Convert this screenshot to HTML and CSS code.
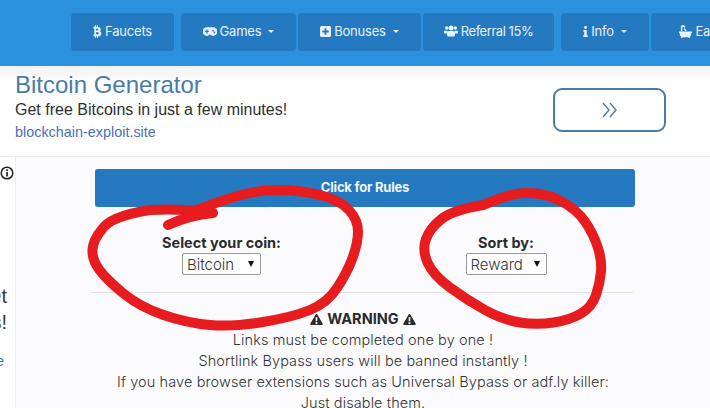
FILE: index.html
```html
<!DOCTYPE html>
<html lang="en">
<head>
<meta charset="utf-8">
<title>Bitcoin Generator</title>
<link rel="stylesheet" href="styles.css">
</head>
<body>
<div class="page">
  <nav class="nav">
    <a class="nav-btn w-faucets"><svg class="ic" viewBox="0 0 10 14"><path fill="#e8f2fb" d="M2 0h1.3v1.8h1V0h1.3v1.9C7.6 2.2 8.700 3.200 8.700 4.600c0 1-.6 1.800-1.400 2.200 1.100.4 1.900 1.300 1.900 2.600 0 1.800-1.400 2.800-3.500 2.900V14H4.300v-1.700h-1V14H2v-1.700H.5v-2h1V3.700h-1v-2H2zm1.300 3.900v2h1.500c.7 0 1.200-.4 1.200-1s-.5-1-1.200-1zm0 3.900v2.300h1.800c.8 0 1.300-.5 1.300-1.150S5.900 7.800 5.100 7.800z"/></svg>Faucets</a>
    <a class="nav-btn w-games"><svg class="ic ic-wide" viewBox="0 0 16 10"><path fill="#e8f2fb" fill-rule="evenodd" d="M4.500 0h7a4.800 4.800 0 0 1 0 10c-1.400 0-2.300-.8-3-1.700h-1c-.7.9-1.600 1.700-3 1.700a4.800 4.800 0 0 1 0-10zM3.800 2.800v1.400H2.400v1.500h1.400v1.500h1.500V5.700h1.400V4.200H5.300V2.800zm7.700.2a1 1 0 1 0 0 2 1 1 0 0 0 0-2zm1.500 2a1 1 0 1 0 0 2 1 1 0 0 0 0-2z"/></svg>Games<span class="caret"></span></a>
    <a class="nav-btn w-bonuses"><svg class="ic" viewBox="0 0 11 11"><path fill="#e8f2fb" fill-rule="evenodd" d="M1.500 0h8A1.500 1.500 0 0 1 11 1.500v8A1.500 1.500 0 0 1 9.500 11h-8A1.500 1.500 0 0 1 0 9.500v-8A1.500 1.500 0 0 1 1.500 0zM4.600 2.300v2.300H2.300v1.800h2.300v2.300h1.800V6.400h2.300V4.600H6.400V2.300z"/></svg>Bonuses<span class="caret"></span></a>
    <a class="nav-btn w-referral"><svg class="ic ic-users" viewBox="0 0 14 11"><g fill="#e8f2fb"><circle cx="2.700" cy="2.500" r="1.700"/><circle cx="11.300" cy="2.500" r="1.700"/><circle cx="7" cy="2.600" r="2.500"/><path d="M0 5.200h2.800c.6 0 .9.300 1 .6-.7.500-1.100 1.300-1.100 2.300H.6C.2 8.100 0 7.800 0 7.400zM14 5.200h-2.800c-.6 0-.9.300-1 .6.700.5 1.100 1.300 1.100 2.300h2.100c.4 0 .6-.3.600-.7z"/><path d="M4.700 5.500h4.600c1 0 1.700.8 1.700 1.800v2.200c0 .9-.6 1.500-1.500 1.500H4.500c-.9 0-1.500-.6-1.500-1.500V7.300c0-1 .7-1.800 1.700-1.800z"/></g></svg>Referral 15%</a>
    <a class="nav-btn w-info"><svg class="ic ic-info" viewBox="0 0 6 13"><g fill="#e8f2fb"><circle cx="3" cy="1.700" r="1.700"/><path d="M.5 4.700h4v6.300h1.200v2H.3v-2h1.200V6.700h-1z"/></g></svg>Info<span class="caret"></span></a>
    <a class="nav-btn w-earn"><svg class="ic ic-bath" viewBox="0 0 14 14"><g fill="#e8f2fb"><path d="M2 7V2.200C2 1 2.900 0 4.200 0c.9 0 1.500.5 1.900 1.200L7 1.800 5.800 3.300 5 2.400c-.2-.4-.5-.6-.8-.6-.4 0-.6.300-.6.700V7z"/><path d="M6 3.500l2.200 2.200-1 1-2.200-2.200zM0 7h14v1.500h-.7c0 2.200-.7 3.400-1.800 4.100l.5 1.400h-1.500l-.4-.8H3.900l-.4.800H2l.5-1.400C1.400 11.900.7 10.700.7 8.500H0z"/></g></svg>Earn</a>
  </nav>

  <section class="ad">
    <div class="ad-copy">
      <h2 class="ad-title">Bitcoin Generator</h2>
      <p class="ad-text">Get free Bitcoins in just a few minutes!</p>
      <a class="ad-link">blockchain-exploit.site</a>
    </div>
    <a class="ad-cta"><svg class="chev" viewBox="0 0 15 16"><path fill="none" stroke="#4a7ba6" stroke-width="1.400" d="M1 1l6 7-6 7M8 1l6 7-6 7"/></svg></a>
  </section>

  <div class="main">
    <aside class="side">
      <svg class="info-ic" viewBox="0 0 14 14"><circle cx="7" cy="7" r="5.800" fill="#fff" stroke="#222" stroke-width="1.500"/><rect x="6.200" y="6" width="1.700" height="4.500" fill="#222"/><rect x="6.200" y="3.300" width="1.700" height="1.700" fill="#222"/></svg>
      <p class="side-head">Get<br>Bitcoins!</p>
      <a class="side-link">exploit.site</a>
    </aside>
    <main class="content">
      <button class="rules">Click for Rules</button>
      <div class="selectors">
        <label class="field field-coin"><b>Select your coin:</b><span class="select select-coin">Bitcoin<i class="arrow"></i></span></label>
        <label class="field field-sort"><b>Sort by:</b><span class="select select-sort">Reward<i class="arrow"></i></span></label>
      </div>
      <hr class="rule">
      <div class="warning">
        <h3 class="warn-title"><svg class="tri" viewBox="0 0 14 12"><path fill="#2b2b2b" fill-rule="evenodd" d="M7 0c.4 0 .7.200.9.500l5.900 10c.4.700-.1 1.500-.9 1.500H1.100C.3 12-.2 11.200.2 10.500l5.900-10C6.300.2 6.600 0 7 0zM6 3.500l.2 4.500h1.600L8 3.500zM7 8.700a1.200 1.200 0 1 0 0 2.400 1.200 1.200 0 0 0 0-2.400z"/></svg> WARNING <svg class="tri" viewBox="0 0 14 12"><path fill="#2b2b2b" fill-rule="evenodd" d="M7 0c.4 0 .7.200.9.500l5.900 10c.4.700-.1 1.500-.9 1.500H1.100C.3 12-.2 11.200.2 10.500l5.900-10C6.300.2 6.600 0 7 0zM6 3.500l.2 4.500h1.600L8 3.500zM7 8.700a1.200 1.200 0 1 0 0 2.400 1.200 1.200 0 0 0 0-2.400z"/></svg></h3>
        <p>Links must be completed one by one !</p>
        <p>Shortlink Bypass users will be banned instantly !</p>
        <p>If you have browser extensions such as Universal Bypass or adf.ly killer:</p>
        <p>Just disable them.</p>
      </div>
    </main>
  </div>

  <svg class="scribble" viewBox="0 0 710 408" aria-hidden="true">
    <path d="M168 225Q190 215 213 213Q180 208 150 210Q110 216 101.500 230Q93 240 92.500 250Q92 260 99.500 270Q107 280 123.500 293.500Q140 307 163.500 315Q187 323 210 325Q233 327 263 322Q293 317 310 310Q327 303 337 288Q347 273 352.500 258Q358 243 358 231.500Q358 220 349 210Q340 200 320 195Q300 190 278.500 190Q257 190 237 196Q217 202 197 210" fill="none" stroke="#e61c1f" stroke-width="10" stroke-linecap="round" stroke-linejoin="round"/>
    <path d="M483 205Q453 210 441.500 219Q430 228 426 239Q422 250 427.500 262.500Q433 275 450 287.500Q467 300 485 310Q503 320 520 322.500Q537 325 553.500 322.500Q570 320 581 313.500Q592 307 596 295Q600 283 601 271.500Q602 260 597.500 246.500Q593 233 585 221.500Q577 210 563.500 202.500Q550 195 536.500 193.500Q523 192 513 194.500Q503 197 483 205Z" fill="none" stroke="#e61c1f" stroke-width="10" stroke-linecap="round" stroke-linejoin="round"/>
  </svg>
</div>
</body>
</html>
```
FILE: styles.css
```css
* { box-sizing: border-box; }
html, body { margin: 0; padding: 0; }
body { font-family: "Inter", "Liberation Sans", sans-serif; background: #fbfbfd; color: #2b2b2b; overflow: hidden; }
.page { position: relative; width: 710px; height: 408px; overflow: hidden; }

.nav { height: 66px; background: #2b90de; padding: 13px 0 0 71px; display: flex; align-items: flex-start; gap: 2px; overflow: hidden; }
.nav-btn { flex: none; height: 38px; padding-bottom: 2px; background: #2579c0; border-radius: 4px; color: #e8f2fb; font-size: 13px; letter-spacing: -.2px; display: flex; align-items: center; justify-content: center; }
.w-faucets { width: 103px; margin-right: 5px; }
.w-games { width: 115px; }
.w-bonuses { width: 123px; }
.w-referral { width: 131px; margin-right: 5px; letter-spacing: -.45px; }
.w-info { width: 88px; }
.w-earn { width: 100px; }
.ic { width: 9px; height: 13px; margin-right: 3px; flex: none; }
.ic-wide { width: 14px; height: 9px; }
.w-bonuses .ic { width: 11px; height: 11px; }
.ic-users { width: 14px; height: 12px; }
.ic-info { width: 5px; height: 11px; }
.ic-bath { width: 13px; height: 13px; }
.caret { width: 0; height: 0; margin-left: 7px; border-left: 3.500px solid transparent; border-right: 3.500px solid transparent; border-top: 3.500px solid #e8f2fb; }

.ad { height: 91px; background: linear-gradient(#f1f2f3 0, #f6f6f7 8px, #fff 14px); border-bottom: 1px solid #e6e6e8; padding-left: 15px; display: flex; align-items: flex-start; }
.ad-copy { flex: 1; padding-top: 5px; }
.ad-title { margin: 0; font: 400 24px/28px "Liberation Sans", sans-serif; color: #4a7ba6; }
.ad-text { margin: 0; font: 16px/22px "Liberation Sans", sans-serif; color: #2f2f2f; }
.ad-link { display: block; margin-top: 1px; font: 14.400px/20px "Liberation Sans", sans-serif; color: #4a6fb5; }
.ad-cta { flex: none; width: 113px; height: 44px; margin: 22px 44px 0 0; border: 2px solid #4a7ba6; border-radius: 9px; display: flex; align-items: center; justify-content: center; }
.chev { width: 15px; height: 16px; }

.main { display: flex; height: 251px; }
.side { flex: none; width: 16px; background: #fff; border-right: 1px solid #eeeef1; overflow: hidden; padding-top: 9px; display: flex; flex-direction: column; align-items: flex-end; }
.info-ic { width: 14px; height: 14px; margin-right: 1px; align-self: flex-start; flex: none; }
.side-head { margin: 103px 0 0; font: 20px/26px "Liberation Sans", sans-serif; color: #3a3a3a; text-align: right; white-space: nowrap; padding-right: 8px; }
.side-link { margin-top: 17px; font: 14px/18px "Liberation Sans", sans-serif; color: #4a6fb5; white-space: nowrap; padding-right: 11px; }

.content { flex: none; width: 560px; margin-left: 74px; padding-top: 12px; text-align: center; }
.rules { display: block; width: 540px; height: 38px; margin-left: 5px; padding-bottom: 3px; background: #2579c0; color: #eef5fb; font: 700 13px "Inter", sans-serif; border: 0; border-radius: 3px; letter-spacing: -.2px; }
.selectors { display: flex; margin-top: 27px; height: 58px; }
.field { display: flex; flex-direction: column; align-items: center; font-size: 14.500px; line-height: 18px; color: #2b2b2b; }
.field b { font-weight: 700; letter-spacing: 0; white-space: nowrap; }
.field-coin { margin-left: 47px; width: 169px; }
.field-sort { margin-left: 145px; width: 110px; }
.select { margin-top: 1px; height: 22px; background: #fff; border: 1px solid #9a9a9a; border-radius: 2px; display: flex; align-items: center; justify-content: space-between; font: 300 15px "Inter", sans-serif; padding: 0 4px; color: #333; }
.select-coin { width: 79px; }
.select-sort { width: 81px; }
.arrow { width: 0; height: 0; border-left: 3.500px solid transparent; border-right: 3.500px solid transparent; border-top: 6px solid #111; margin-right: 2px; }
.rule { margin: 0; width: 543px; border: 0; border-top: 1px solid #e3e3e6; }
.warning { margin-top: 16px; margin-left: -7px; width: 560px; }
.warn-title { margin: 0; font-size: 14.500px; font-weight: 700; line-height: 20px; display: flex; align-items: center; justify-content: center; gap: 4px; }
.tri { width: 13px; height: 11px; }
.warning p { margin: 0; font-size: 14.500px; line-height: 21px; font-weight: 300; color: #333; letter-spacing: .1px; white-space: nowrap; }

.scribble { position: absolute; left: 0; top: 0; width: 710px; height: 408px; pointer-events: none; }
```
